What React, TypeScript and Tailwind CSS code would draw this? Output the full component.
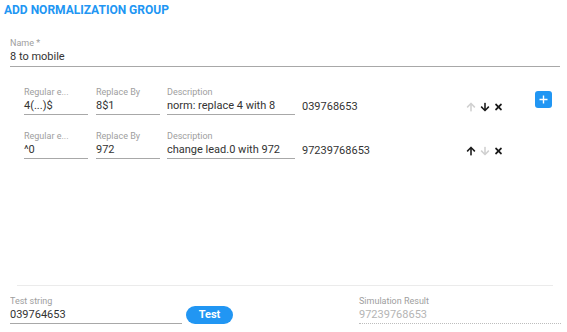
import React from "react";
import { FaArrowUp, FaArrowDown, FaTimes } from "react-icons/fa";

function Field({ label, value, w }: { label: string; value: string; w: string }) {
  return (
    <div className={`${w} flex flex-col`}>
      <div className="text-[9px] leading-[11px] text-[#9e9e9e] whitespace-nowrap overflow-hidden">{label}</div>
      <div className="text-[11px] leading-[14px] pt-[1px] pb-[1px] text-[#333] border-b border-[#a8a8a8] whitespace-nowrap">{value}</div>
    </div>
  );
}

function Row({
  regex,
  replace,
  desc,
  result,
  upOn,
  downOn,
  plus,
}: {
  regex: string;
  replace: string;
  desc: string;
  result: string;
  upOn: boolean;
  downOn: boolean;
  plus?: boolean;
}) {
  return (
    <div className="h-[44px] flex items-start pl-[24px]">
      <Field label="Regular e..." value={regex} w="w-[64px]" />
      <div className="w-[8px]" />
      <Field label="Replace By" value={replace} w="w-[64px]" />
      <div className="w-[7px]" />
      <Field label="Description" value={desc} w="w-[128px]" />
      <div className="w-[7px]" />
      <div className="w-[164px] pt-[13px] text-[11px] leading-[14px] text-[#333]">{result}</div>
      <div className="pt-[15px] flex items-center gap-[4px]">
        <FaArrowUp className={`w-[10px] h-[10px] ${upOn ? "text-[#1a1a1a]" : "text-[#d0d0d0]"}`} />
        <FaArrowDown className={`w-[10px] h-[10px] ${downOn ? "text-[#1a1a1a]" : "text-[#d0d0d0]"}`} />
        <FaTimes className="w-[9px] h-[10px] text-[#1a1a1a]" />
      </div>
      {plus && (
        <div className="ml-[32px] mt-[4px] w-[17px] h-[17px] rounded-[3px] bg-[#2196f3] flex items-center justify-center">
          <svg width="9" height="9" viewBox="0 0 9 9">
            <path d="M4.5 0.5v8M0.5 4.5h8" stroke="white" strokeWidth="1.4" />
          </svg>
        </div>
      )}
    </div>
  );
}

export default function App() {
  return (
    <div
      className="w-[567px] h-[332px] bg-white flex flex-col overflow-hidden"
      style={{ fontFamily: "Roboto, 'Liberation Sans', sans-serif" }}
    >
      <div className="h-[20px] pl-[4px] pt-[3px] text-[12px] leading-[14px] font-bold text-[#2196f3]">
        ADD NORMALIZATION GROUP
      </div>
      <div className="mt-[18px] ml-[10px] mr-[7px] flex flex-col">
        <div className="text-[9px] leading-[11px] text-[#9e9e9e]">Name *</div>
        <div className="text-[11px] leading-[14px] pt-[1px] pb-[2px] text-[#333] border-b border-[#a8a8a8]">
          8 to mobile
        </div>
      </div>
      <div className="mt-[20px] flex flex-col">
        <Row
          regex="4(...)$"
          replace="8$1"
          desc="norm: replace 4 with 8"
          result="039768653"
          upOn={false}
          downOn={true}
          plus
        />
        <Row
          regex="^0"
          replace="972"
          desc="change lead.0 with 972"
          result="97239768653"
          upOn={true}
          downOn={false}
        />
      </div>
      <div className="flex-1" />
      <div className="ml-[17px] mr-[14px] border-t border-[#ebebeb]" />
      <div className="mt-[10px] mb-[8px] pl-[10px] flex items-start">
        <Field label="Test string" value="039764653" w="w-[172px]" />
        <div className="ml-[4px] mt-[10px] w-[47px] h-[18px] rounded-full bg-[#2196f3] text-white text-[11px] font-bold flex items-center justify-center">
          Test
        </div>
        <div className="ml-[126px] w-[202px] flex flex-col">
          <div className="text-[9px] leading-[11px] text-[#9e9e9e]">Simulation Result</div>
          <div className="text-[11px] leading-[14px] pt-[1px] pb-[1px] text-[#b5b5b5] border-b border-dotted border-[#bdbdbd]">
            97239768653
          </div>
        </div>
      </div>
    </div>
  );
}
